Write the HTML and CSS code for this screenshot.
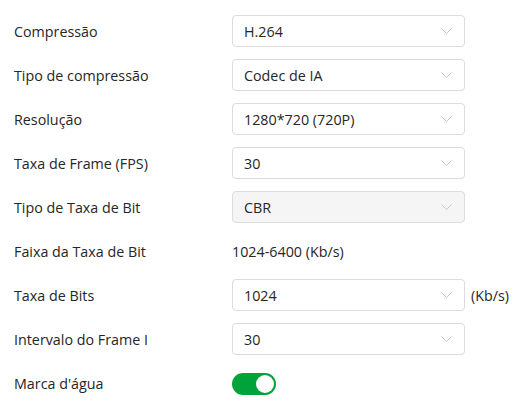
FILE: index.html
```html
<!DOCTYPE html>
<html>
<head>
<meta charset="utf-8">
<link rel="stylesheet" href="styles.css">
</head>
<body>
<div class="form">
  <div class="row"><div class="label">Compressão</div><div class="control"><div class="select"><span>H.264</span><svg class="chev" width="11" height="7" viewBox="0 0 11 7"><path d="M0.5 0.5 L5.5 5.5 L10.5 0.5" fill="none" stroke="#c4c4c4" stroke-width="1"/></svg></div></div></div>
  <div class="row"><div class="label">Tipo de compressão</div><div class="control"><div class="select"><span>Codec de IA</span><svg class="chev" width="11" height="7" viewBox="0 0 11 7"><path d="M0.5 0.5 L5.5 5.5 L10.5 0.5" fill="none" stroke="#c4c4c4" stroke-width="1"/></svg></div></div></div>
  <div class="row"><div class="label">Resolução</div><div class="control"><div class="select"><span>1280*720 (720P)</span><svg class="chev" width="11" height="7" viewBox="0 0 11 7"><path d="M0.5 0.5 L5.5 5.5 L10.5 0.5" fill="none" stroke="#c4c4c4" stroke-width="1"/></svg></div></div></div>
  <div class="row"><div class="label">Taxa de Frame (FPS)</div><div class="control"><div class="select"><span>30</span><svg class="chev" width="11" height="7" viewBox="0 0 11 7"><path d="M0.5 0.5 L5.5 5.5 L10.5 0.5" fill="none" stroke="#c4c4c4" stroke-width="1"/></svg></div></div></div>
  <div class="row"><div class="label">Tipo de Taxa de Bit</div><div class="control"><div class="select disabled"><span>CBR</span><svg class="chev" width="11" height="7" viewBox="0 0 11 7"><path d="M0.5 0.5 L5.5 5.5 L10.5 0.5" fill="none" stroke="#c4c4c4" stroke-width="1"/></svg></div></div></div>
  <div class="row"><div class="label">Faixa da Taxa de Bit</div><div class="control"><span class="text">1024-6400 (Kb/s)</span></div></div>
  <div class="row"><div class="label">Taxa de Bits</div><div class="control"><div class="select"><span>1024</span><svg class="chev" width="11" height="7" viewBox="0 0 11 7"><path d="M0.5 0.5 L5.5 5.5 L10.5 0.5" fill="none" stroke="#c4c4c4" stroke-width="1"/></svg></div><span class="unit">(Kb/s)</span></div></div>
  <div class="row"><div class="label">Intervalo do Frame I</div><div class="control"><div class="select"><span>30</span><svg class="chev" width="11" height="7" viewBox="0 0 11 7"><path d="M0.5 0.5 L5.5 5.5 L10.5 0.5" fill="none" stroke="#c4c4c4" stroke-width="1"/></svg></div></div></div>
  <div class="row"><div class="label">Marca d'água</div><div class="control"><div class="toggle"><div class="knob"></div></div></div></div>
</div>
</body>
</html>
```
FILE: styles.css
```css
html, body {
  margin: 0;
  padding: 0;
  background: #fff;
}
body {
  font-family: "Open Sans", "Noto Sans", sans-serif;
  font-size: 14.3px;
  color: #262626;
}
.form {
  padding: 15px 0 0 14px;
  display: flex;
  flex-direction: column;
  gap: 12px;
}
.row {
  display: flex;
  align-items: center;
  height: 32px;
}
.label {
  width: 218px;
  flex-shrink: 0;
}
.control {
  display: flex;
  align-items: center;
  gap: 6px;
}
.select {
  box-sizing: border-box;
  width: 233px;
  height: 32px;
  border: 1px solid #dcdcdc;
  border-radius: 4px;
  display: flex;
  align-items: center;
  justify-content: space-between;
  padding: 0 12px 0 11px;
}
.select.disabled {
  background: #f5f5f5;
}
.chev {
  display: block;
  margin-top: 1px;
}
.toggle {
  width: 44px;
  height: 22px;
  border-radius: 11px;
  background: #00a23a;
  position: relative;
  margin-top: 2px;
}
.knob {
  position: absolute;
  top: 2px;
  right: 2px;
  width: 18px;
  height: 18px;
  border-radius: 50%;
  background: #fff;
}
```
